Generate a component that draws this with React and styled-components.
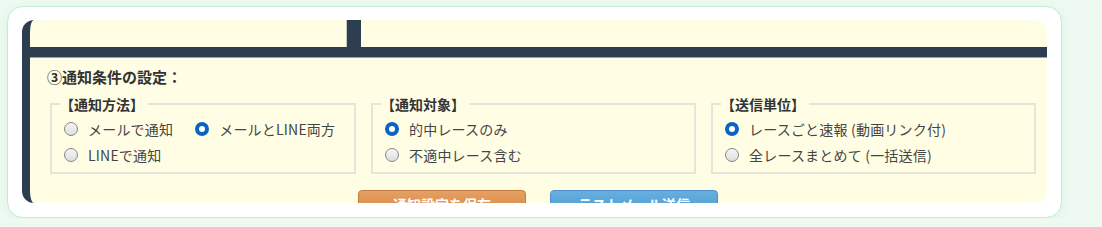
import React from "react";
import styled, { createGlobalStyle } from "styled-components";

const GlobalStyle = createGlobalStyle`
  body {
    margin: 0;
    background: #edf9f1;
    font-family: "Noto Sans CJK JP", "Noto Sans", sans-serif;
  }
`;

const Page = styled.div`
  padding: 6px 0 0 7px;
`;

const Card = styled.div`
  width: 1055px;
  height: 212px;
  box-sizing: border-box;
  padding: 13px 14px 14px 14px;
  background: #ffffff;
  border: 1px solid #bdf0d0;
  border-radius: 16px;
  box-shadow: 0 2px 8px rgba(120, 200, 150, 0.12);
`;

const Panel = styled.div`
  height: 183px;
  background: #fffee5;
  border-left: 8px solid #2c3e50;
  border-radius: 12px;
  overflow: hidden;
`;

const TableTail = styled.div`
  display: flex;
  height: 27px;
  border-bottom: 10px solid #2c3e50;
  box-shadow: 0 1px 0 #9ea39a;
`;

const Cell = styled.div`
  width: ${(p) => (p.$w ? `${p.$w}px` : "auto")};
  flex: ${(p) => (p.$w ? "none" : 1)};
`;

const Divider = styled.div`
  width: 14px;
  background: #2c3e50;
  box-shadow: -1px 0 0 #c9c9b8;
`;

const Section = styled.div`
  padding: 10px 11px 0 17px;
`;

const Title = styled.div`
  font-size: 15px;
  font-weight: 700;
  color: #333;
  line-height: 20px;
`;

const Groups = styled.div`
  display: flex;
  gap: 15px;
  margin-top: 8px;
  padding-left: 3px;
`;

const Group = styled.fieldset`
  width: ${(p) => p.$w}px;
  box-sizing: border-box;
  margin: 0;
  padding: 6px 10px 7px 12px;
  border: 2px solid #e5e5dc;
  min-width: 0;
`;

const Legend = styled.legend`
  padding: 0 4px 0 0;
  margin-left: -4px;
  font-size: 14px;
  font-weight: 700;
  color: #333;
  line-height: 18px;
`;

const Options = styled.div`
  display: flex;
  flex-direction: ${(p) => (p.$column ? "column" : "row")};
  flex-wrap: wrap;
  column-gap: 22px;
  row-gap: 6px;
`;

const Option = styled.label`
  display: flex;
  align-items: center;
  gap: 10px;
  font-size: 14px;
  color: #454545;
  line-height: 20px;
  letter-spacing: 0.2px;
  white-space: nowrap;
`;

const Radio = styled.input.attrs({ type: "radio" })`
  appearance: none;
  margin: 0;
  width: 14px;
  height: 14px;
  box-sizing: border-box;
  border-radius: 50%;
  border: 1px solid #858585;
  background: linear-gradient(#f6f6f6, #dedede);
  &:checked {
    border: 4px solid #0a64c6;
    background: #ffffff;
  }
`;

const Buttons = styled.div`
  display: flex;
  justify-content: center;
  gap: 24px;
  margin-top: 16px;
  padding-right: 7px;
`;

const Button = styled.button`
  width: 168px;
  height: 32px;
  border-radius: 4px;
  font-family: inherit;
  font-size: 14px;
  font-weight: 700;
  color: #ffffff;
  border: 1px solid ${(p) => (p.$blue ? "#4b90c6" : "#c97b3c")};
  background: ${(p) =>
    p.$blue
      ? "linear-gradient(#66b0e0, #4a92c8)"
      : "linear-gradient(#e6a062, #cf7f3d)"};
  padding: 3px 0 0;
  line-height: 20px;
  display: flex;
  justify-content: center;
  align-items: flex-start;
`;

const groups = [
  {
    title: "【通知方法】",
    width: 306,
    name: "method",
    options: ["メールで通知", "メールとLINE両方", "LINEで通知"],
    checked: 1,
  },
  {
    title: "【通知対象】",
    width: 325,
    name: "target",
    options: ["的中レースのみ", "不適中レース含む"],
    checked: 0,
    column: true,
  },
  {
    title: "【送信単位】",
    width: 325,
    name: "unit",
    options: ["レースごと速報 (動画リンク付)", "全レースまとめて (一括送信)"],
    checked: 0,
    column: true,
  },
];

export default function App() {
  return (
    <>
      <GlobalStyle />
      <Page>
        <Card>
          <Panel>
            <TableTail>
              <Cell $w={317} />
              <Divider />
              <Cell />
            </TableTail>
            <Section>
              <Title>③通知条件の設定：</Title>
              <Groups>
                {groups.map((g) => (
                  <Group key={g.name} $w={g.width}>
                    <Legend>{g.title}</Legend>
                    <Options $column={g.column}>
                      {g.options.map((o, i) => (
                        <Option key={o}>
                          <Radio name={g.name} defaultChecked={i === g.checked} />
                          {o}
                        </Option>
                      ))}
                    </Options>
                  </Group>
                ))}
              </Groups>
              <Buttons>
                <Button>通知設定を保存</Button>
                <Button $blue>テストメール送信</Button>
              </Buttons>
            </Section>
          </Panel>
        </Card>
      </Page>
    </>
  );
}
